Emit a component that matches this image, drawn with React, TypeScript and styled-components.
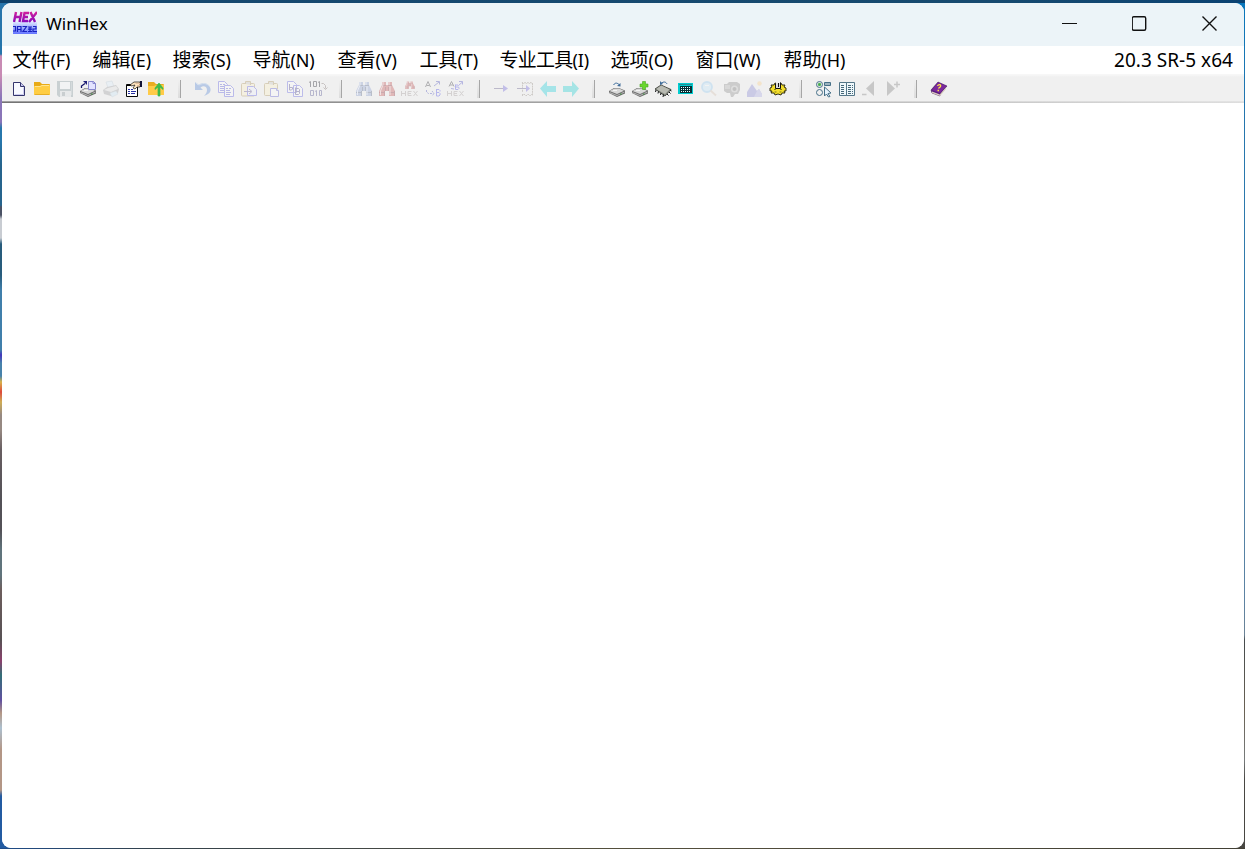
import React from 'react';
import styled, { createGlobalStyle } from 'styled-components';

const Global = createGlobalStyle`
  * { box-sizing: border-box; }
  html, body, #root { margin: 0; height: 100%; overflow: hidden; }
  body { font-family: "Noto Sans", "Noto Sans CJK SC", sans-serif; color: #000; }
`;

const Desktop = styled.div`
  width: 1245px;
  height: 849px;
  padding: 3px 1px 1px 2px;
  background:
    linear-gradient(90deg, #0d416b, #15486f 12%, #164a70 80%, #0a4272) 0 0 / 100% 3px no-repeat,
    linear-gradient(90deg, #1d4c8a, #34424c 12%, #55503d 50%, #424035) 0 848px / 100% 1px no-repeat,
    linear-gradient(#2675ab 0 54px, #c88bb4 56px 76px, #8a75b8 98px 122px, #2777ac 128px 141px, #26648d 165px 205px,
      #4b5265 207px 215px, #c8ccd2 219px 238px, #285c7c 244px 275px, #407fab 290px 350px, #4335bd 355px,
      #4782ab 363px 376px, #d8b24a 382px, #dd493c 392px, #cfad55 402px, #968982 415px 430px, #675e61 450px,
      #535157 500px 530px, #60747c 550px 575px, #6d5e5d 590px, #575154 640px, #8b416d 661px, #326f77 675px,
      #6050a0 700px, #b49785 713px, #adc0cf 728px, #b39686 750px 790px, #235ba2 796px 849px) 0 0 / 10px 849px no-repeat,
    linear-gradient(#0877bc, #2375ae 110px, #347cab 300px, #5d83a3 600px, #6b8295 635px, #454b4d 640px,
      #696153 710px, #777b7c 760px, #474642 780px 849px) right 0 / 12px 849px no-repeat,
    #3b6a92;
`;
const Window = styled.main`
  display: flex;
  flex-direction: column;
  width: 1242px;
  height: 845px;
  overflow: hidden;
  border-radius: 9px;
  background: #fff;
`;
const TitleBar = styled.header`
  display: flex;
  align-items: center;
  height: 43px;
  flex: none;
  padding: 0 0 2px 11px;
  background: #ecf4f8;
`;
const Title = styled.h1`
  flex: 1;
  margin: 0 0 0 9px;
  font-size: 17px;
  line-height: 24px;
  font-weight: 400;
  letter-spacing: 0.05px;
`;
const CaptionButton = styled.button`
  display: grid;
  place-items: center;
  width: 70px;
  height: 41px;
  padding: 0 0 1px 1px;
  border: 0;
  background: transparent;
`;
const MenuBar = styled.nav`
  display: flex;
  align-items: center;
  gap: 22px;
  height: 28px;
  flex: none;
  padding: 0 11px 0 10.5px;
  background: #fff;
`;
const MenuItem = styled.span<{ $w: number; $tight?: boolean }>`
  width: ${p => p.$w}px;
  flex: none;
  font-size: 19px;
  line-height: 28px;
  white-space: nowrap;
  letter-spacing: ${p => (p.$tight ? '-0.75px' : '0')};
`;
const Access = styled.span`
  font-size: 18px;
  letter-spacing: -0.15px;
`;
const Version = styled.span`
  margin-left: auto;
  font-size: 19px;
  letter-spacing: 0.03px;
  line-height: 28px;
  white-space: nowrap;
`;
const ToolBar = styled.div`
  display: flex;
  align-items: center;
  height: 29px;
  flex: none;
  padding: 1px 0 0 6px;
  background:
    linear-gradient(90deg, #a0a0a0, #d0d0d0 60%, #e3e3e3) 0 27px / 100% 1px no-repeat,
    linear-gradient(90deg, #747474, #b4b4b4 60%, #dedede) 0 28px / 100% 1px no-repeat,
    linear-gradient(#f7f7f7 0 1px, #f0f0f0 3px);
`;
const Tool = styled.button<{ $dim?: boolean }>`
  display: flex;
  width: 23px;
  height: 23px;
  align-items: center;
  flex: none;
  padding: 0 0 0 3px;
  border: 0;
  background: transparent;
  opacity: ${p => (p.$dim ? 0.33 : 1)};
`;
const Separator = styled.div`
  width: 23px;
  height: 18px;
  flex: none;
  &::before {
    content: '';
    display: block;
    width: 2px;
    height: 18px;
    margin-left: 9px;
    border-right: 1px solid #a6a6a6;
    background: linear-gradient(#f0f0f0, #dcdcdc);
  }
`;
const Workspace = styled.section`
  flex: 1;
  background: #fff;
`;
const Glyph = styled.svg`
  display: block;
  flex: none;
  width: 16px;
  height: 16px;
  overflow: visible;
`;

const Drive = () => (
  <g>
    <path d="M0 10 5 7h5l6 2.500v3L8 16l-8-4Z" fill="#6d6d6d" />
    <path d="m.5 10 5-2.500H10l5 2.200L8 13Z" fill="#d9d9d9" />
    <path d="m.5 11 7.500 3 7.500-3.500v1L8 15l-7.500-3Z" fill="#b8b8b8" />
    <path d="M4 9.500h4" stroke="#f4f4f4" />
    <path d="M11 13h1.500" stroke="#318c31" />
  </g>
);
const Binoculars = ({ fill, edge, light }: { fill: string; edge: string; light: string }) => (
  <g>
    <path d="M3 1h4v3h2V1h4v3l3 6v5h-6v-5H6v5H0v-5l3-6Z" fill={fill} />
    <path d="M3 4.500h4m2 0h4M0 11.500h6m4 0h6M6.500 6v4m3-4v4m-4 0v5m10-5v5" stroke={edge} fill="none" />
    <path d="M4 1v3L1.500 10v4m8.500-13v3m1 1v9" stroke={light} fill="none" />
  </g>
);
const RedBinoculars = () => <Binoculars fill="#c04a4a" edge="#7e1f2a" light="#efc6c6" />;
const TextLines = ({ x, y }: { x: number; y: number }) => (
  <path d={`M${x} ${y}h2m1 0h2m-5 2h4m-4 2h5m-5 2h4`} stroke="#4848cf" />
);
const HexWord = () => (
  <path d="M-.5 10v5m4-5v5m-4-2.500h4M9.500 10.500H6v4h3.500m-3.500-2h3M11.500 10l4 5m0-5-4 5" stroke="#9c9493" fill="none" />
);

type IconEntry = { name: string; dim?: boolean; art: React.ReactNode } | null;

const tools: IconEntry[] = [
  { name: '新建', art: <g><path d="M2.500 1.500h7l4 4v9h-11Z" fill="#f8f9ff" stroke="#35356d" /><path d="M9.500 1.500v4h4" fill="#c6c6ec" stroke="#35356d" /><path d="M3.500 13.500h9v-7" stroke="#ccccee" fill="none" /></g> },
  { name: '打开', art: <g><path d="M0 1h6l2 2h7a1 1 0 0 1 1 1v9a1 1 0 0 1-1 1H1a1 1 0 0 1-1-1Z" fill="#e8aa16" /><path d="M0 5h6l2-1h8v9a1 1 0 0 1-1 1H1a1 1 0 0 1-1-1Z" fill="#ffcd43" /><path d="M1 5.500h5l2-1h7" stroke="#ffe491" fill="none" /><path d="M1 13.500h14" stroke="#e6ae27" /></g> },
  { name: '保存', dim: true, art: <g><path d="M0 0h16v16H2l-2-2Z" fill="#7d9098" /><path d="M3 1h10v7H3Z" fill="#f7fcff" /><path d="M3 10h11v6H3Z" fill="#d6dde0" /><path d="M5 11h3v4H5Z" fill="#7b8b90" /><path d="M14 1h1v13h-1Z" fill="#a3b3b9" /></g> },
  { name: '打开磁盘', art: <g><Drive /><path d="M8.500.5h5l2 2v6h-7Z" fill="#e3e3ff" stroke="#8787cd" /><path d="M13 .5v2h2.500" stroke="#8787cd" fill="none" /><path d="M1.500 7V5L5 2.500" stroke="#151568" strokeWidth="1.300" fill="none" /><path d="M3 0h4v4Z" fill="#202078" /></g> },
  { name: '打印', dim: true, art: <g><path d="m3 1 6-1 2 6-6 1Z" fill="#dceeff" stroke="#a9bdcd" strokeWidth=".7" /><path d="m0 9 4-3 9-2 3 4-1 4-7 3-7-2Z" fill="#96989a" /><path d="m1 9 4-2 8-2 2 3-7 3Z" fill="#dedfe0" /><path d="m7 12 6-2 2 3-6 3Z" fill="#c8e5f8" stroke="#a2b8c3" strokeWidth=".5" /></g> },
  { name: '属性', art: <g><path d="M.5 3.500h11v12H.5Z" fill="#fff" stroke="#080808" /><path d="M1 4.500h5" stroke="#000" /><path d="M2 8.500h2m1 0h2m-5 2h2m1 0h5m-8 2h2m1 0h4" stroke="#2831a3" /><path d="m4 4 4-3h6v5h-3L9 8 7 7l2-3-4 1Z" fill="#ffe6c1" stroke="#17120e" strokeWidth=".7" /><path d="M9.500 2.500H14m-3 2h3" stroke="#e6bf9f" /><path d="M14 0h2v6h-2Z" fill="#131336" /></g> },
  { name: '上级目录', art: <g><path d="M-1 1h6l2 2h7a1 1 0 0 1 1 1v10H-1Z" fill="#e9ad20" /><path d="M-1 5h6l2-1h8v10H-1Z" fill="#ffcb48" /><path d="M9 15V6l-3 2.500V7l4-5 4 5v1.500L11 6v9Z" fill="#3ebb4c" stroke="#3ebb4c" strokeWidth=".7" /></g> },
  null,
  { name: '撤销', dim: true, art: <g><path d="M0 1v8h8L5.500 6.500C9 4 12 6 12 9c0 2-1 4-3 6 5-2 7-4 6.500-7C15 3 9 0 3 4Z" fill="#4d80d2" /><path d="m1 2 3 2c5-3 9-1 11 2" stroke="#a2c3ee" fill="none" /></g> },
  { name: '复制', dim: true, art: <g fill="#fff" stroke="#4f4fdf"><path d="M.5 .5h6l3 3v8h-9Z" /><TextLines x={2} y={3.5} /><path d="M6.500 4.500h6l3 3v8h-9Z" /><TextLines x={8} y={7.5} /></g> },
  { name: '粘贴', dim: true, art: <g fill="#fff0c4" stroke="#a58c4f"><rect x=".5" y="2.500" width="13" height="12.500" rx="1" /><path d="M4.500 3V.5h5V4" fill="#c8c4bb" /><path d="M6.500 5.500h6l3 3v6h-9Z" fill="#eef0ff" stroke="#5353de" /><path d="M3 10.500h7M8 8l3 2.500L8 13" fill="none" stroke="#54478a" /></g> },
  { name: '剪贴板', dim: true, art: <g fill="#fff0c4" stroke="#a58c4f"><rect x=".5" y="2.500" width="13" height="12" rx="1" /><path d="M4.500 3V.5h5V4" fill="#c8c4bb" /><path d="M6.500 7.500h6l2 2v6h-8Z" fill="#fff" stroke="#5353ce" /><path d="M12.500 7.500v2h2" stroke="#5353ce" /></g> },
  { name: '复制块', dim: true, art: <g fill="#fff" stroke="#5555e0"><path d="M.5 .5h6l3 3v8h-9ZM6.500 4.500h6l3 3v8h-9Z" /><path d="M2.500 3v6h2l1-1V6.500h-3m6 0v7h3l1-1v-2h-4m0-3h3l1 1v2" fill="none" stroke="#403980" /></g> },
  { name: '修改数据', dim: true, art: <g fill="none" stroke="#10101b"><path d="M-1 1.500.5.500v5.500M3.500.5h3v5h-3ZM8 1.500l1.500-1V6" /><path d="M.5 9.500h3v5h-3ZM5 10.500l1.500-1V15M9.500 9.500h2v5h-2Z" stroke="#454588" /><path d="M11.500 2.500h2l2 2v3m-2-1 2 2 2-2" stroke="#756764" /></g> },
  null,
  { name: '查找文本', dim: true, art: <Binoculars fill="#8499cc" edge="#4d5c7b" light="#e0e9ff" /> },
  { name: '查找十六进制', dim: true, art: <RedBinoculars /> },
  { name: '查找值', dim: true, art: <g><g transform="translate(3 0) scale(.6 .53)"><RedBinoculars /></g><HexWord /></g> },
  { name: '替换文本', dim: true, art: <g fill="none" stroke="#303038"><path d="M.5 6 3 .5 5.500 6M1.500 4.500h3" /><path d="M11.500 8v7h2.500l1-1v-1.500l-1-1h-2.500m0-3H14l1 1v1" stroke="#4444e4" /><path d="M9 5l5-4M11 .5h3.500v3" stroke="#4246b8" /><path d="M1.500 9v2l2 1.500h5M7 10l2 2.500L7 15" stroke="#4246b8" strokeDasharray="2 1" /></g> },
  { name: '替换十六进制', dim: true, art: <g><HexWord /><path d="M1 5.500 3.500.5 6 5.500M2 4h3" fill="none" stroke="#303038" /><path d="M7.500 3.500v5H10l1-1V6.500l-1-.5H7.500m0-2H10l.5 1" fill="none" stroke="#4444e4" /><path d="m11 4 3.500-3M11 .5h3.500v3M3 7.500l3 .5" fill="none" stroke="#4444c4" /></g> },
  null,
  { name: '转到偏移', dim: true, art: <g><path d="M0 7.500h12" stroke="#564c7f" /><path d="m9 4 5 3.500L9 11Z" fill="#665bd8" /></g> },
  { name: '转到扇区', dim: true, art: <g><path d="M5.500 1v10m0 2v2m10-13v13M5 1l1.500 2L8 1l1.500 2L11 1l1.500 2L14 1l1.500 2M5 15l2-2 2 2 2-2 2 2 2-2" fill="none" stroke="#8b8178" strokeDasharray="2 .6" /><path d="M0 7.500h12" stroke="#564c7f" /><path d="m9 4 4 3.500L9 11Z" fill="#665bd8" /></g> },
  { name: '后退', dim: true, art: <path d="m0 7.500 7-7.500v5h9v6H7v5Z" fill="#10ced9" /> },
  { name: '前进', dim: true, art: <path d="M0 5h9V0l7 7.500L9 16v-5H0Z" fill="#10ced0" /> },
  null,
  { name: '磁盘工具', art: <g><Drive /><path d="M4.500 4c2-3 4-2 6 0" stroke="#3a6b9b" fill="none" /><path d="m8 5 3.500.5V2Z" fill="#406d99" /></g> },
  { name: '添加磁盘', art: <g><Drive /><path d="M10.500.5h3v2.500H16v3h-2.500v2.500h-3V6H8V3h2.500Z" fill="#69d62d" stroke="#46a823" strokeWidth=".6" /></g> },
  { name: '内存', art: <g><path d="m0 8 6-4 10 4.500L10 15Z" fill="#8a8d84" stroke="#33362f" strokeWidth=".8" /><path d="m1.200 8 5-3.400 8.300 4L10 13Z" fill="#b9bbb3" /><path d="m1 9-.5 2M3.500 10.500l-.5 2m3-.5-.5 2m3-.5L8 16m4-3 1.500 1.500M14 11l1.500 1.500M15 9l1.500 1" stroke="#101214" /><path d="M6 2.500c3-2.500 5-1.500 6 .5" fill="none" stroke="#3a6b9b" /><path d="m5 0 0 4 3-1Z" fill="#406d99" /></g> },
  { name: '计算器', art: <g><path d="M0 2h15v11H0Z" fill="#00cdd0" /><path d="M1 3.500h13" stroke="#2d8c91" /><path d="M2 5h12v7H2Z" fill="#052f35" /><path d="M3 6.500h10M3 8.500h10M3 10.500h10" stroke="#e8ffff" strokeWidth="1.200" strokeDasharray="1 1" /></g> },
  { name: '查看', dim: true, art: <g opacity=".85"><circle cx="6" cy="6" r="5" fill="#b9e2ff" stroke="#7cc2f2" strokeWidth="1.800" /><path d="m9.500 9.500 5.500 5" stroke="#cdb5a0" strokeWidth="1.800" /><path d="M4 4.500h4" stroke="#fff" /></g> },
  { name: '拍照', dim: true, art: <g><path d="M0 3h3l2-2h8l3 2v6l-2 4h-3l-2 3H7l-1-4H3L0 10Z" fill="#858585" /><path d="M1 4h5v4H1Z" fill="#a8a8a8" /><circle cx="10.500" cy="8" r="3.500" fill="#bbb" /><circle cx="10.500" cy="8" r="2" fill="#686868" /></g> },
  { name: '图像', dim: true, art: <g opacity=".9"><path d="M0 16v-5L5 3l5 7 2-2 3 5v3Z" fill="#7473cc" /><path d="m7 16 3-6 2-2 3 5v3Z" fill="#a0a0e0" /><circle cx="12.500" cy="2.500" r="2.200" fill="#ffca74" /></g> },
  { name: '常规选项', art: <g><path d="m0 7 2-1-1-2 3 0 1-2 3 1 3-1 1 2 3 0-1 2 2 1v3l-2 0 1 2-3 0-1 2-3-1-3 1-1-2-3 0 1-2-2 0Z" fill="#f3de2d" stroke="#1f1e08" strokeWidth=".9" /><path d="M4 8.500h2m4 0h2M4.500 11h2m3 0h2" stroke="#847b12" /><path d="M6 2h4v6H6Z" fill="#dcdcdc" /><path d="M5.500 2.500v5h5v-6M8.500 2v4" fill="none" stroke="#111" /></g> },
  null,
  { name: '选择项', art: <g fill="none" stroke="#467088"><circle cx="3.500" cy="3.500" r="3" /><circle cx="3.500" cy="11.500" r="3" /><circle cx="3.500" cy="3.500" r="1.200" fill="#40aa4b" stroke="#40aa4b" /><path d="M8.500 1.500h6v3h-6Z" fill="#9db3bf" /><path d="m8.500 6 6.500 6-3 .5 2 3-1.500.5-2-3-2 2Z" fill="#e7f4ff" /></g> },
  { name: '列表', art: <g fill="#eff8fb" stroke="#557789"><path d="M.5 1.500h7v13h-7Zm7 0h8v13h-8Z" /><path d="M2 4.500h4m-4 2h4m-4 2h4m-4 2h4m-4 2h4m3-8h5m-5 2h5m-5 2h5m-5 2h5m-5 2h5" stroke="#466779" strokeDasharray="3 1" /></g> },
  { name: '上一个', dim: true, art: <g><path d="M12 0v15L4 7.500Z" fill="#777" /><path d="M0 13.500h4.500" stroke="#777" strokeWidth="1.500" /></g> },
  { name: '下一个', dim: true, art: <g><path d="M2 0v15l8-7.500Z" fill="#777" /><path d="M9 3.500h6m-3-3v6" stroke="#777" strokeWidth="1.500" /></g> },
  null,
  { name: '帮助', art: <g><path d="m0 9 7-8 9 4-7 8v2L1 12Z" fill="#5c1a80" stroke="#3d1550" strokeWidth=".5" /><path d="m1 9 6-7.500 8.500 3.500L9 12Z" fill="#7b2a9c" /><path d="m1 10.500 8 3 6-7v1.500l-6 7-8-3Z" fill="#d8ccba" /><path d="M6.500 5c1-2 4-1.500 3 .5C9 6.500 8 6.500 7.500 7.500M6.500 9.500H8" stroke="#ffe545" strokeWidth="1.300" fill="none" /></g> },
];

const menu: [string, string, number][] = [
  ['文件', 'F', 58], ['编辑', 'E', 58], ['搜索', 'S', 58], ['导航', 'N', 63], ['查看', 'V', 60],
  ['工具', 'T', 58], ['专业工具', 'I', 89], ['选项', 'O', 63], ['窗口', 'W', 66], ['帮助', 'H', 62],
];

const Logo = styled.svg`
  width: 24px;
  height: 24px;
  margin-bottom: 1px;
  flex: none;
`;

const AppLogo = () => (
  <Logo viewBox="0 0 24 24">
    <defs>
      <linearGradient id="winhexTop" gradientUnits="userSpaceOnUse" x1="0" y1="1" x2="0" y2="11"><stop stopColor="#d0209c" /><stop offset="1" stopColor="#8a0abb" /></linearGradient>
      <linearGradient id="winhexBase" x1="0" y1="0" x2="0" y2="1"><stop stopColor="#dce6ff" /><stop offset="1" stopColor="#6272ff" /></linearGradient>
    </defs>
    <path d="M0 11h24v12H0Z" fill="url(#winhexBase)" />
    <path d="M3 1 1 11m7.500-10-2 10M2 6h5.500M16 2h-4.500L10 10h5m-4-4h4M17.500 1l4.500 10M24 1l-8 10" fill="none" stroke="url(#winhexTop)" strokeWidth="2.400" />
    <path d="M0 15.500h2.500V20H0m4.500 1v-5.500H8V21m-3.500-2.500H8m1.500-3h4l-3.500 5h4M15 16h4m-4 2.200h4M15 20.500h4m-2-4.500v4.500m3-5h3V18h-3v2.500h4" fill="none" stroke="#1722c0" strokeWidth="1.200" />
  </Logo>
);

export default function App() {
  return (
    <Desktop>
      <Global />
      <Window>
        <TitleBar>
          <AppLogo />
          <Title>WinHex</Title>
          <CaptionButton aria-label="最小化"><svg width="16" height="16"><path d="M0 8.500h15" stroke="#111" /></svg></CaptionButton>
          <CaptionButton aria-label="最大化"><svg width="16" height="16"><rect x=".2" y="1.750" width="13.500" height="13.500" rx="1.500" fill="none" stroke="#111" strokeWidth="1.400" /></svg></CaptionButton>
          <CaptionButton aria-label="关闭"><svg width="16" height="16"><path d="m.5 1.500 14 14M14.500 1.500.5 15.500" stroke="#111" strokeWidth="1.400" /></svg></CaptionButton>
        </TitleBar>
        <MenuBar>
          {menu.map(([label, key, width]) => (
            <MenuItem key={label} $w={width} $tight={label.length > 2}>{label}<Access>({key})</Access></MenuItem>
          ))}
          <Version>20.3 SR-5 x64</Version>
        </MenuBar>
        <ToolBar>
          {tools.map((tool, i) => tool ? (
            <Tool key={i} $dim={tool.dim} aria-label={tool.name}><Glyph viewBox="0 0 16 16">{tool.art}</Glyph></Tool>
          ) : <Separator key={i} />)}
        </ToolBar>
        <Workspace />
      </Window>
    </Desktop>
  );
}
